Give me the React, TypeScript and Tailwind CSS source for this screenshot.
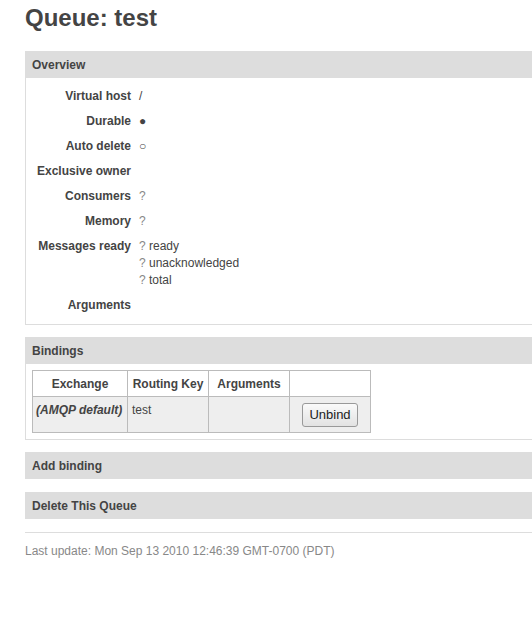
import React from "react";

const font = { fontFamily: '"Liberation Sans", Arial, sans-serif' };

function Section({ title, children }: { title: string; children?: React.ReactNode }) {
  return (
    <div>
      <div className="h-[27px] bg-[#dddddd] pl-[7px] text-[12px] leading-[28px] font-bold text-[#444]">
        {title}
      </div>
      {children && (
        <div className="border-b border-l border-[#dddddd]">{children}</div>
      )}
    </div>
  );
}

function Row({ label, children }: { label: string; children?: React.ReactNode }) {
  return (
    <div className="grid grid-cols-[105px_1fr] gap-x-[8px] py-[4px] leading-[17px]">
      <div className="text-right font-bold text-[#444]">{label}</div>
      <div>{children}</div>
    </div>
  );
}

const Q = () => <span className="text-[#888]">?</span>;

export default function App() {
  return (
    <div style={font} className="w-[532px] h-[629px] overflow-hidden bg-white text-[12px] text-[#444]">
      <div className="w-[600px] pl-[25px]">
        <h1 className="pt-[4px] text-[24px] leading-[28px] font-bold text-[#444]">Queue: test</h1>

        <div className="mt-[19px]">
          <Section title="Overview">
            <div className="pt-[6px] pb-[6px]">
              <Row label="Virtual host">/</Row>
              <Row label="Durable">●</Row>
              <Row label="Auto delete">○</Row>
              <Row label="Exclusive owner" />
              <Row label="Consumers"><Q /></Row>
              <Row label="Memory"><Q /></Row>
              <Row label="Messages ready">
                <div><Q /> ready</div>
                <div><Q /> unacknowledged</div>
                <div><Q /> total</div>
              </Row>
              <Row label="Arguments" />
            </div>
          </Section>
        </div>

        <div className="mt-[12px]">
          <Section title="Bindings">
            <div className="px-[6px] pt-[6px] pb-[6px]">
              <table className="w-[338px] table-fixed border-collapse text-[12px]">
                <colgroup>
                  <col className="w-[95px]" />
                  <col className="w-[81px]" />
                  <col className="w-[81px]" />
                  <col className="w-[81px]" />
                </colgroup>
                <thead>
                  <tr className="h-[26px] bg-white">
                    <th className="border border-[#bbb] px-[4px] text-center font-bold whitespace-nowrap">Exchange</th>
                    <th className="border border-[#bbb] px-[4px] text-center font-bold whitespace-nowrap">Routing Key</th>
                    <th className="border border-[#bbb] px-[4px] text-center font-bold whitespace-nowrap">Arguments</th>
                    <th className="border border-[#bbb]"></th>
                  </tr>
                </thead>
                <tbody>
                  <tr className="h-[36px] bg-[#eeeeee]">
                    <td className="border border-[#bbb] px-[3px] pt-[4px] align-top font-bold italic whitespace-nowrap">(AMQP default)</td>
                    <td className="border border-[#bbb] px-[4px] pt-[4px] align-top">test</td>
                    <td className="border border-[#bbb]"></td>
                    <td className="border border-[#bbb] text-center align-middle">
                      <button className="h-[24px] rounded-[3px] border border-[#999] bg-gradient-to-b from-[#fafafa] to-[#e2e2e2] px-[6px] text-[13px] text-[#222]">
                        Unbind
                      </button>
                    </td>
                  </tr>
                </tbody>
              </table>
            </div>
          </Section>
        </div>

        <div className="mt-[12px]">
          <Section title="Add binding" />
        </div>
        <div className="mt-[13px]">
          <Section title="Delete This Queue" />
        </div>

        <div className="mt-[13px] border-t border-[#dddddd] pt-[10px] leading-[17px] text-[#888]">
          Last update: Mon Sep 13 2010 12:46:39 GMT-0700 (PDT)
        </div>
      </div>
    </div>
  );
}
